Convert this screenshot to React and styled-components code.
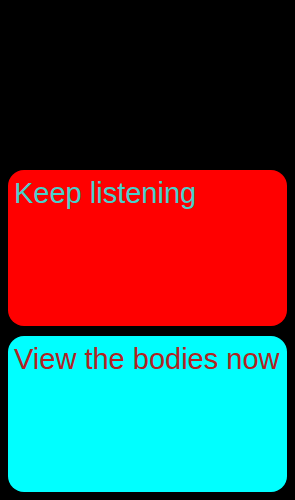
import styled, { createGlobalStyle } from "styled-components";

const GlobalStyle = createGlobalStyle`
  html, body {
    margin: 0;
    padding: 0;
    background: #000;
  }
`;

const Screen = styled.div`
  box-sizing: border-box;
  height: 100vh;
  padding: 8px;
  display: flex;
  flex-direction: column;
  justify-content: flex-end;
  gap: 10px;
  font-family: "Liberation Sans", Arial, sans-serif;
`;

const Card = styled.button`
  box-sizing: border-box;
  height: 156px;
  width: 100%;
  border: none;
  border-radius: 16px;
  padding: 7px 5px 5px 6px;
  margin: 0;
  display: block;
  text-align: left;
  font-family: inherit;
  font-size: 29px;
  line-height: normal;
  background: ${(p) => p.$bg};
  color: ${(p) => p.$fg};
  cursor: pointer;
  & > span {
    display: block;
    height: 100%;
  }
`;

export default function App() {
  return (
    <>
      <GlobalStyle />
      <Screen>
        <Card $bg="#ff0000" $fg="#48d1cc">
          <span>Keep listening</span>
        </Card>
        <Card $bg="#00ffff" $fg="#b22222">
          <span>View the bodies now</span>
        </Card>
      </Screen>
    </>
  );
}
